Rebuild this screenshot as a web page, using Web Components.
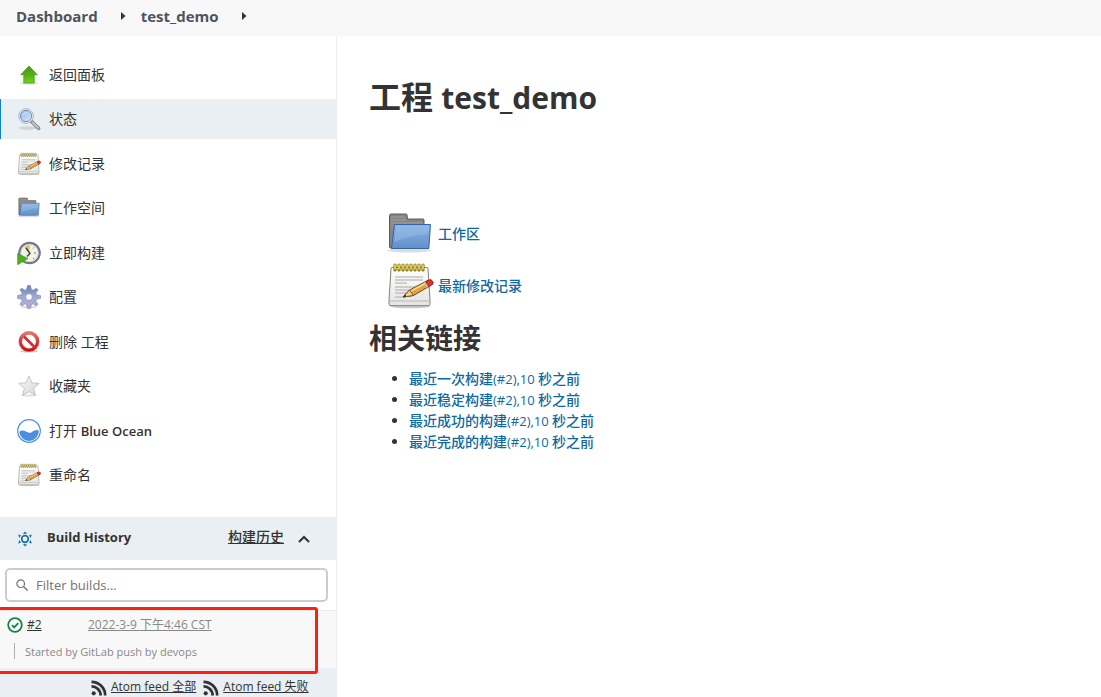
<!DOCTYPE html>
<html lang="zh-CN">
<head>
<meta charset="utf-8">
<title>test_demo [Jenkins]</title>
<style>
  body { margin: 0; background: #fff; color: #333; font: 14px/20px "Open Sans", "Noto Sans CJK SC", sans-serif; }
</style>
</head>
<body>
<jk-app></jk-app>
<script>
const ICONS = {
  up: ['0 0 24 24', `<defs><linearGradient id="g" x1="0" y1="0" x2="0" y2="1"><stop offset="0" stop-color="#459a0c"/><stop offset=".5" stop-color="#57ad16"/><stop offset="1" stop-color="#6fd41c"/></linearGradient></defs>
    <ellipse cx="12" cy="20.3" rx="9" ry="1.4" fill="#ddd"/><path d="M12 3 20.3 11.7H17.2V20H6.8V11.7H3.7Z" fill="url(#g)" stroke="#4b9b1b" stroke-width=".8" stroke-linejoin="round"/>`],
  search: ['0 0 24 24', `<defs><linearGradient id="g" x1="0" y1="0" x2="1" y2="1"><stop offset="0" stop-color="#8fb4e2"/><stop offset="1" stop-color="#dceafa"/></linearGradient></defs>
    <ellipse cx="11" cy="21" rx="9" ry="1.8" fill="#d2d5d7"/><path d="m14.5 14.5 7 6.8" stroke="#808589" stroke-width="3.6" stroke-linecap="round"/><path d="m15.5 15.5 5.6 5.3" stroke="#c5c8cb" stroke-width="1.8" stroke-linecap="round"/>
    <circle cx="9" cy="9" r="7.3" fill="#fff" stroke="#a9adb2"/><circle cx="9" cy="9" r="5.7" fill="url(#g)" stroke="#668fc9"/><path d="M5.2 9C5 5.5 9 4 11.5 5.6Z" fill="#c2d8f4"/>`],
  notepad: ['0 0 48 48', `<defs><linearGradient id="g" x1="0" y1="0" x2="0" y2="1"><stop offset="0" stop-color="#fff"/><stop offset="1" stop-color="#e3e3e1"/></linearGradient></defs>
    <ellipse cx="24" cy="44.3" rx="20" ry="2" fill="#ccc"/><path d="M6 5.5H41Q42 5.5 42 7L44 38V42Q44 43.7 42.3 43.7H5Q3 43.7 3 42V38L5 7Q5 5.5 6 5.5Z" fill="url(#g)" stroke="#81817f"/>
    <path d="M4 39H43" stroke="#b8b8b4"/><path d="M9 15H37M9 18H37M9 21H21M9 25H35M9 28H31M9 31H28M9 35H20" stroke="#aaa"/>
    <path d="M9 8V3M13 8V3M17 8V3M21 8V3M25 8V3M29 8V3M33 8V3M37 8V3" stroke="#8c7810" stroke-width="3.2" stroke-linecap="round"/><path d="M9 7V3M13 7V3M17 7V3M21 7V3M25 7V3M29 7V3M33 7V3M37 7V3" stroke="#f0dc55" stroke-width="1.6" stroke-linecap="round"/>
    <path d="m17 35 6.5-7L42 18.3Q46 17 47 20.4 47 22 45.5 23L27.5 33.5Z" fill="#e4a33c" stroke="#6c4b1d"/><path d="m17 35 6.5-7 4 5.5Z" fill="#efd09b" stroke="#76562c"/><path d="m25 29 15-8" stroke="#fad58a" stroke-width="1.6"/><path d="M39.5 19.8 42.4 18.3Q46 17 47 20.4 47 22 45.5 23L42.5 24.8Z" fill="#e0312b" stroke="#a5211c"/><path d="m38.5 20.3 3 5" stroke="#bbb" stroke-width="1.8"/><path d="m17 35 2.3-2.5 1 1.7Z" fill="#222"/>`],
  folder: ['0 0 48 48', `<defs><linearGradient id="g" x1="0" y1="0" x2="0" y2="1"><stop offset="0" stop-color="#8ab2e2"/><stop offset="1" stop-color="#6090cb"/></linearGradient></defs>
    <ellipse cx="23" cy="40.5" rx="22" ry="2" fill="#ddd"/><path d="M3.5 37V5.5Q3.5 4 5 4H20Q21 4 21 5L21.5 9H37Q38 9 38 10V38H5Q3.5 38 3.5 37Z" fill="#858585" stroke="#5c5c5c"/><path d="M5 7H19M5 10H20M5 13H37M5 16H36" stroke="#a0a0a0"/>
    <path d="M8.5 14.5H44.5L42.8 38.5H5.5Z" fill="url(#g)" stroke="#3565a4" stroke-linejoin="round"/><path d="M9.7 15.7H43.3L42.4 24Q24 25 8.5 32Z" fill="#9fc0e8" opacity=".45"/>`],
  build: ['0 0 24 24', `<circle cx="12.5" cy="12" r="10.2" fill="#f2f2e9" stroke="#77758e" stroke-width="2.2"/><circle cx="12.5" cy="12" r="8.7" fill="none" stroke="#c7c6d3" stroke-width=".7"/><path d="M12 12 7.5 6.5Q9.5 3.7 13 4.3Z" fill="#d6c44d"/><path d="m9 7 4 5.5-3 3" fill="none" stroke="#383c3e" stroke-width="1.3"/><path d="M17 6.5l-1 1M19 12h-2M17 18l-1-1" fill="none" stroke="#777" stroke-width="1"/><path d="M.6 12.5 11 17.5.6 23.7Z" fill="#4fae1b" stroke="#3c9414" stroke-width=".6"/>`],
  gear: ['0 0 24 24', `<defs><linearGradient id="g" x1="0" y1="0" x2="0" y2="1"><stop offset="0" stop-color="#6580b1"/><stop offset=".5" stop-color="#a0acd1"/><stop offset="1" stop-color="#b4add0"/></linearGradient></defs>
    <ellipse cx="12" cy="22" rx="8" ry="1.4" fill="#ddd"/><path fill-rule="evenodd" d="M10.6.5H13.4L14.4 4.5 16 5.2 19.4 3.2 21 4.8 18.8 8 19.5 9.7 23.6 10.7V13.3L19.5 14.3 18.8 16 21 19.3 19.3 21 16 18.8 14.4 19.5 13.4 23.4H10.6L9.6 19.5 8 18.8 4.7 21 3 19.3 5.2 16 4.5 14.3.4 13.3V10.7L4.5 9.7 5.2 8 3 4.8 4.6 3.2 8 5.2 9.6 4.5ZM12 8.7A3.3 3.3 0 1 0 12 15.3 3.3 3.3 0 1 0 12 8.7Z" fill="url(#g)" stroke="#7484b0" stroke-width=".6"/>`],
  remove: ['0 0 24 24', `<defs><linearGradient id="g" x1="0" y1="0" x2="0" y2="1"><stop offset="0" stop-color="#e98080"/><stop offset=".5" stop-color="#dc3535"/><stop offset="1" stop-color="#d40b0b"/></linearGradient></defs><ellipse cx="12" cy="21.2" rx="9" ry="1.4" fill="#ccc"/><circle cx="12" cy="11.5" r="8.4" fill="#fff"/><path fill-rule="evenodd" d="M12 1.4A10.1 10.1 0 1 0 12 21.6 10.1 10.1 0 1 0 12 1.4M12 4.3A7.2 7.2 0 1 1 12 18.7 7.2 7.2 0 1 1 12 4.3" fill="url(#g)" stroke="#c53a3a" stroke-width=".5"/><path d="m7 6.5 10 10" stroke="#d92d2d" stroke-width="2.6"/>`],
  star: ['0 0 24 24', `<defs><linearGradient id="g" x1="0" y1="0" x2="1" y2="1"><stop offset="0" stop-color="#fafafa"/><stop offset="1" stop-color="#d5d5d3"/></linearGradient></defs><ellipse cx="12" cy="21.6" rx="8" ry="1" fill="#ddd"/><path d="M12 2 14.9 8.9 22.2 9.4 16.6 14.2 18.4 21.4 12 17.6 5.6 21.4 7.4 14.2 1.8 9.4 9.1 8.9Z" fill="url(#g)" stroke="#b9b9b7" stroke-width=".8"/>`],
  ocean: ['0 0 24 24', `<circle cx="12" cy="12" r="11.3" fill="#fff" stroke="#4a90e2" stroke-width="1.2"/><path d="M2.2 12.8Q5.5 10.4 9.5 12.8T15.5 12.6Q18.5 10 21.8 11.4A9.8 9.8 0 0 1 2.2 12.8Z" fill="#4a90e2"/>`],
  sun: ['0 0 16 16', `<circle cx="8" cy="8" r="3.3" fill="none" stroke="#1572a8" stroke-width="1.7"/><path d="M5.8 2.8 8 .6 10.2 2.8ZM5.8 13.2 8 15.4 10.2 13.2Z" fill="#1572a8"/><path d="M1.2 3.6 4 4.2 2.3 6.9ZM14.8 3.6 12 4.2 13.7 6.9ZM1.2 12.4 4 11.8 2.3 9.1ZM14.8 12.4 12 11.8 13.7 9.1Z" fill="#1572a8"/>`],
  chevron: ['0 0 12 12', `<path d="m1 9 5-5 5 5" fill="none" stroke="#333" stroke-width="2"/>`],
  filter: ['0 0 12 12', `<circle cx="4.7" cy="4.7" r="3.8" fill="none" stroke="#737373" stroke-width="1.2"/><path d="m7.5 7.5 4 4" stroke="#737373" stroke-width="1.4"/>`],
  success: ['0 0 16 16', `<circle cx="8" cy="8" r="6.8" fill="#fff" stroke="#138347" stroke-width="1.8"/><path d="m5 8.2 2.2 2.2L11.2 6.2" fill="none" stroke="#138347" stroke-width="1.9"/>`],
  feed: ['0 0 16 16', `<circle cx="2.7" cy="13.3" r="2.1" fill="#333"/><path d="M.5 6.4A9 9 0 0 1 9.6 15.5M.5 1.8A13.7 13.7 0 0 1 14.2 15.5" fill="none" stroke="#333" stroke-width="2.7"/>`],
  arrow: ['0 0 6 8', `<path d="M1 0 5.5 4 1 8Z" fill="#333"/>`]
};

function define(name, render) {
  customElements.define(name, class extends HTMLElement {
    constructor() {
      super();
      this.attachShadow({ mode: 'open' });
    }
    connectedCallback() {
      this.shadowRoot.innerHTML = '<style>*{box-sizing:border-box}a{color:inherit}</style>' + render(this);
    }
  });
}

define('jk-icon', el => {
  const [box, art] = ICONS[el.getAttribute('name')];
  return `<style>:host{display:block;flex:none;width:24px;height:24px}svg{display:block;width:100%;height:100%}</style>
    <svg viewBox="${box}" aria-hidden="true">${art}</svg>`;
});

define('jk-breadcrumbs', () => `<style>
  :host{display:block;background:#f8f8f8}
  nav{display:flex;align-items:center;height:36px;padding:0 16px 4px;font-size:15px;font-weight:700;color:#4d545d}
  a{text-decoration:none} jk-icon{width:6px;height:8px;margin:0 15px 0 22px}
  </style><nav aria-label="breadcrumbs"><a href="#dashboard">Dashboard</a><jk-icon name="arrow"></jk-icon><a href="#job">test_demo</a><jk-icon name="arrow"></jk-icon></nav>`);

define('jk-task', () => `<style>
  :host{display:block}
  a{display:flex;align-items:center;gap:8px;height:40px;padding-left:17px;text-decoration:none}
  :host([active]) a{background:#e9eff2;box-shadow:inset 1px 0 #0b85cf}
  .label{white-space:pre}
  ::slotted(b){font-size:13px;font-weight:600}
  </style><a href="#task"><slot name="icon"></slot><span class="label"><slot></slot></span></a>`);

define('jk-tasks', () => `<style>
  :host{display:flex;flex-direction:column;justify-content:space-between;min-height:440px;margin:19px 0 22px}
  </style><slot></slot>`);

define('jk-build', () => `<style>
  :host{display:block;position:relative;background:#f8f8f8;border-top:1px solid #ececec;height:58px;font-size:12px;line-height:18px}
  .head{display:flex;align-items:center;padding:5px 0 0 7px}
  jk-icon{width:16px;height:16px;margin-right:4px}
  .num{width:61px;color:#333} .date{color:#888}
  .why{margin:9px 0 0 14px;padding-left:10px;height:16px;font-size:11px;line-height:18px;border-left:1px solid #a5afb5;color:#888}
  .mark{position:absolute;inset:-4px 18px -6px -3px;border:3px solid #ff2012;border-radius:3px}
  </style><div class="head"><jk-icon name="success"></jk-icon><span class="num"><a href="#2">#2</a></span><a class="date" href="#2">2022-3-9 下午4:46 CST</a></div>
  <div class="why">Started by GitLab push by devops</div><div class="mark"></div>`);

define('jk-history', () => `<style>
  :host{display:flex;flex-direction:column;flex:1}
  header{display:flex;align-items:center;height:43px;padding:0 26px 0 17px;background:#e9eff2}
  header jk-icon{width:16px;height:16px;margin-right:14px}
  h2{margin:0;font-size:13px;line-height:20px;font-weight:700;flex:1}
  h2,header a{padding-bottom:3px}
  header a{font-weight:500}
  button{all:unset;display:block;margin-left:14px;cursor:pointer} button jk-icon{width:12px;height:12px;margin:0}
  .filter{display:flex;align-items:center;gap:8px;margin:8px 8px 8px 5px;height:34px;padding:0 9px;border:2px solid #ccc;border-radius:5px}
  .filter jk-icon{width:12px;height:12px}
  input{flex:1;min-width:0;border:0;outline:0;padding:0;background:none;font:inherit;font-size:13px;color:#333}
  input::placeholder{color:#737373;opacity:1}
  footer{display:flex;flex:1;align-items:flex-start;padding:10px 0 0 91px;background:#e9eff2;font-size:12px;line-height:18px}
  footer jk-icon{width:16px;height:16px;margin:2px 4px 0 0} footer a{margin-right:7px;white-space:nowrap}
  </style><header><jk-icon name="sun"></jk-icon><h2>Build History</h2><a href="#trend">构建历史</a><button aria-label="collapse"><jk-icon name="chevron"></jk-icon></button></header>
  <label class="filter"><jk-icon name="filter"></jk-icon><input type="text" placeholder="Filter builds..." aria-label="Filter builds"></label>
  <jk-build></jk-build>
  <footer><jk-icon name="feed"></jk-icon><a href="#all">Atom feed 全部</a><jk-icon name="feed"></jk-icon><a href="#failed">Atom feed 失败</a></footer>`);

define('jk-project', () => `<style>
  :host{display:block;padding:41px 32px 0}
  h1{margin:0;font-size:32px;line-height:40px;font-weight:700}
  h1 span{font-size:30px;line-height:30px}
  .links{display:grid;gap:4px;margin:93px 0 0 17px}
  .links a{display:flex;align-items:center;gap:4px;justify-self:start}
  .links jk-icon{width:48px;height:48px}
  a{color:#0b6aa2;text-decoration:none;font-weight:500}
  h2{margin:8px 0 0;font-size:28px;line-height:40px;font-weight:700}
  ul{margin:10px 0 0;padding-left:40px;line-height:21px}
  li span{font-size:13px;line-height:13px;font-weight:400}
  </style><h1>工程 <span>test_demo</span></h1>
  <div class="links"><a href="#ws"><jk-icon name="folder"></jk-icon>工作区</a><a href="#changes"><jk-icon name="notepad"></jk-icon>最新修改记录</a></div>
  <h2>相关链接</h2>
  <ul>${['最近一次构建', '最近稳定构建', '最近成功的构建', '最近完成的构建'].map(t => `<li><a href="#2">${t}<span>(#2),10 </span>秒之前</a></li>`).join('')}</ul>`);

define('jk-app', () => `<style>
  :host{display:flex;flex-direction:column;min-height:100vh}
  .body{display:grid;grid-template-columns:337px 1fr;flex:1}
  aside{display:flex;flex-direction:column;border-right:1px solid #e9eff2}
  </style><jk-breadcrumbs></jk-breadcrumbs>
  <div class="body"><aside><jk-tasks>${[
    ['up', '返回面板'], ['search', '状态', 'active'], ['notepad', '修改记录'], ['folder', '工作空间'], ['build', '立即构建'],
    ['gear', '配置'], ['remove', '删除 工程'], ['star', '收藏夹'], ['ocean', '打开 <b>Blue Ocean</b>'], ['notepad', '重命名']
  ].map(([icon, text, state = '']) => `<jk-task ${state}><jk-icon slot="icon" name="${icon}"></jk-icon>${text}</jk-task>`).join('')}</jk-tasks>
  <jk-history></jk-history></aside><main><jk-project></jk-project></main></div>`);
</script>
</body>
</html>
